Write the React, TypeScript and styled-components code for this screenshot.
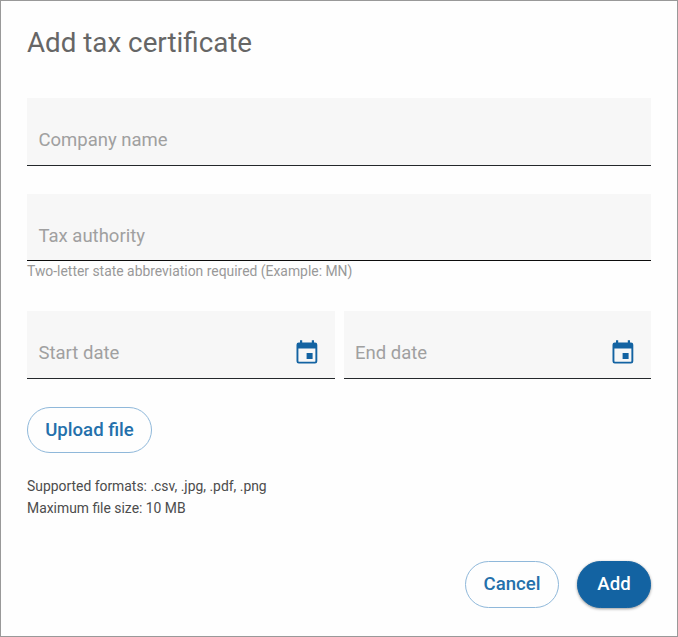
import React from "react";
import styled, { createGlobalStyle } from "styled-components";

const GlobalStyle = createGlobalStyle`
  * { box-sizing: border-box; }
  body { margin: 0; font-family: Roboto, sans-serif; background: #fefefe; }
`;

const Dialog = styled.form`
  width: 678px;
  height: 637px;
  padding: 25px 26px 0;
  border: 1px solid #999;
  background: #fefefe;
  display: flex;
  flex-direction: column;
`;

const Title = styled.h1`
  margin: 0;
  height: 72px;
  font-size: 27.75px;
  line-height: 34px;
  font-weight: 400;
  color: #666;
`;

const Field = styled.label<{ $height?: number; $line?: string }>`
  display: flex;
  align-items: flex-start;
  justify-content: space-between;
  flex: 1;
  height: ${(p) => p.$height ?? 68}px;
  padding: 30px 17px 0 11.5px;
  border-bottom: 1px solid ${(p) => p.$line ?? "#24282b"};
  background: #f7f7f7;
  color: #a0a0a0;
  font-size: 18.5px;
  line-height: 24px;
`;

const FieldRow = styled.div<{ $gap: number }>`
  display: flex;
  gap: 9px;
  margin-bottom: ${(p) => p.$gap}px;
`;

const Hint = styled.p`
  margin: 0;
  height: 50px;
  padding-top: 1px;
  font-size: 13.9px;
  line-height: 18px;
  color: #999;
`;

const Button = styled.button<{ $width: number; $primary?: boolean }>`
  width: ${(p) => p.$width}px;
  height: 46.5px;
  padding: 0 0 1px;
  border: 1px solid ${(p) => (p.$primary ? "#1363a2" : "#8fb8da")};
  border-radius: 24px;
  background: ${(p) => (p.$primary ? "#1363a2" : "#fefefe")};
  box-shadow: ${(p) => (p.$primary ? "0 1px 3px rgba(0,0,0,.4)" : "none")};
  color: ${(p) => (p.$primary ? "#fff" : "#2470ab")};
  font: 500 18.6px/24px Roboto, sans-serif;
`;

const UploadButton = styled(Button)`
  padding: 0;
`;

const Notes = styled.p`
  margin: 22px 0 0;
  font-size: 13.9px;
  line-height: 22px;
  color: #4c4c4c;
`;

const Actions = styled.div`
  display: flex;
  justify-content: flex-end;
  gap: 18px;
  margin-top: 42px;
`;

const Icon = styled.svg`
  display: block;
  flex: none;
  margin-top: -1px;
`;

const CalendarIcon = () => (
  <Icon width="22" height="24" viewBox="0 0 22 24" fill="#1363a2">
    <path
      fillRule="evenodd"
      d="M4 .2h2.2v2.2h9.6V.2H18v2.2h1a2.3 2.3 0 0 1 2.3 2.3v16.6a2.3 2.3 0 0 1-2.3 2.3H2.8a2.3 2.3 0 0 1-2.3-2.3V4.7a2.3 2.3 0 0 1 2.3-2.3H4zM2.4 8.4v12.9c0 .3.2.5.5.5h16c.3 0 .5-.2.5-.5V8.4zm8.2 4.6h6v6h-6z"
    />
  </Icon>
);

export default function App() {
  return (
    <>
      <GlobalStyle />
      <Dialog>
        <Title>Add tax certificate</Title>
        <FieldRow $gap={28}><Field>Company name</Field></FieldRow>
        <FieldRow $gap={0}><Field $height={67} $line="#0c0c0c">Tax authority</Field></FieldRow>
        <Hint>Two-letter state abbreviation required (Example: MN)</Hint>
        <FieldRow $gap={27.5}>
          <Field>Start date<CalendarIcon /></Field>
          <Field>End date<CalendarIcon /></Field>
        </FieldRow>
        <UploadButton type="button" $width={125}>Upload file</UploadButton>
        <Notes>Supported formats: .csv, .jpg, .pdf, .png<br />Maximum file size: 10 MB</Notes>
        <Actions>
          <Button type="button" $width={94}>Cancel</Button>
          <Button type="button" $width={74} $primary>Add</Button>
        </Actions>
      </Dialog>
    </>
  );
}
